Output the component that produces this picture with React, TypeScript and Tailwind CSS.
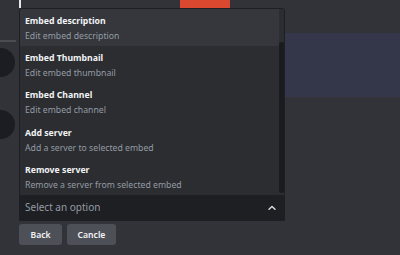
const options = [
  { title: "Embed description", desc: "Edit embed description" },
  { title: "Embed Thumbnail", desc: "Edit embed thumbnail" },
  { title: "Embed Channel", desc: "Edit embed channel" },
  { title: "Add server", desc: "Add a server to selected embed" },
  { title: "Remove server", desc: "Remove a server from selected embed" },
];

function ChevronUp() {
  return (
    <svg width="10" height="10" viewBox="0 0 10 10" fill="none">
      <path d="M2 6.3 L5 3.4 L8 6.3" stroke="#dbdee1" strokeWidth="1.4" strokeLinecap="round" strokeLinejoin="round" />
    </svg>
  );
}

export default function App() {
  return (
    <div className="relative h-[255px] w-[400px] overflow-hidden bg-[#313338] font-['Noto_Sans',sans-serif]">
      {/* background chat remnants */}
      <div className="absolute left-[180px] top-0 h-[8px] w-[50px] bg-[#d9482f]" />
      <div className="absolute left-[19px] top-0 h-[8px] w-[2px] bg-[#e6e6e6]" />
      <div className="absolute left-0 top-[40px] h-[2px] w-[16px] bg-[#4a4c52]" />
      <div className="absolute left-[-14px] top-[48px] h-[29px] w-[29px] rounded-full bg-[#1c1d22]" />
      <div className="absolute left-[-14px] top-[110px] h-[29px] w-[29px] rounded-full bg-[#1c1d22]" />
      <div className="absolute left-[285px] top-[33px] h-[64px] w-[115px] bg-[#34374a]" />

      <div className="absolute left-[19px] top-[8px] w-[266px]">
        <div className="flex flex-col overflow-hidden rounded-t-[3px] border border-[#1e1f22] bg-[#2b2d31]">
          <div className="flex">
            <div className="flex flex-1 flex-col">
              {options.map((o, i) => (
                <div
                  key={o.title}
                  className={`flex h-[37.3px] flex-col justify-center px-[5px] pt-[2px] ${i === 0 ? "bg-[#35373c]" : ""}`}
                >
                  <div className="text-[8.7px] font-bold leading-[15px] text-[#f2f3f5]">{o.title}</div>
                  <div className="text-[8.7px] leading-[15px] text-[#949ba4]">{o.desc}</div>
                </div>
              ))}
            </div>
            <div className="flex w-[5px] flex-col bg-[#2b2d31] pt-[33px] pb-[2px]">
              <div className="flex-1 rounded-full bg-[#1a1b1e]" />
            </div>
          </div>
          <div className="flex h-[25px] items-center justify-between bg-[#1e1f22] pl-[5px] pr-[7px]">
            <span className="text-[10px] text-[#949ba4]">Select an option</span>
            <ChevronUp />
          </div>
        </div>
        <div className="mt-[3px] flex gap-[5px]">
          <button className="h-[21px] w-[43px] rounded-[3px] bg-[#4e5058] text-[8.6px] font-semibold text-[#f2f3f5]">Back</button>
          <button className="h-[21px] w-[49px] rounded-[3px] bg-[#4e5058] text-[8.6px] font-semibold text-[#f2f3f5]">Cancle</button>
        </div>
      </div>
    </div>
  );
}
